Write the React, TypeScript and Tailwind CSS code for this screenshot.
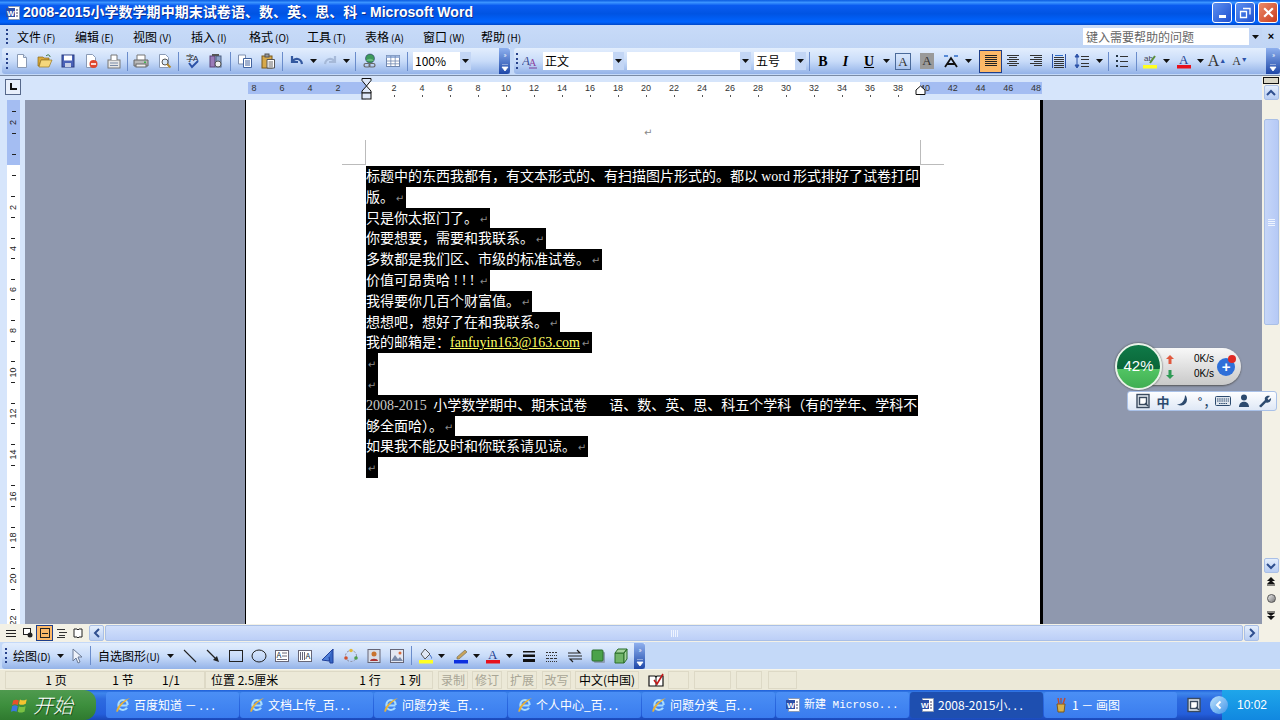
import type { ReactNode } from "react";

const Svg = ({ children, size = 16 }: { children: ReactNode; size?: number }) => (
  <svg viewBox="0 0 16 16" width={size} height={size} className="shrink-0">
    {children}
  </svg>
);

const Page = ({ fold = "#8a9ab5" }: { fold?: string }) => (
  <path d="M3.5 1.5h6l3 3v10h-9z" fill="#fff" stroke={fold} />
);

const icons = {
  newDoc: <Svg><Page /><path d="M9.5 1.5v3h3" fill="#dbe6f6" stroke="#8a9ab5" /></Svg>,
  open: <Svg><path d="M1 4h5l1 1h5v2H4L2 13H1z" fill="#d9a93b" stroke="#8d6a1b" strokeWidth=".7" /><path d="M4 7h11l-3 7H2z" fill="#f5d77c" stroke="#9a7520" strokeWidth=".7" /><path d="M9 3c2-2 4-1 4 1" fill="none" stroke="#2d6a2d" /></Svg>,
  save: <Svg><rect x="2" y="2" width="12" height="12" fill="#4a62b8" stroke="#2b3c80" /><rect x="4" y="2.5" width="8" height="5" fill="#fff" /><rect x="5" y="10" width="6" height="4" fill="#c6cfe6" /></Svg>,
  perm: <Svg><Page /><circle cx="10.5" cy="11" r="4" fill="#e0462e" /><rect x="8" y="10.2" width="5" height="1.6" fill="#fff" /></Svg>,
  mail: <Svg><rect x="2" y="7" width="12" height="8" fill="#e6e6e6" stroke="#777" /><path d="M5 7V2h6v5" fill="#fff" stroke="#777" /><path d="M4 10h8M4 12.5h8" stroke="#7a8ba8" /></Svg>,
  print: <Svg><path d="M4 7V2h8v5" fill="#fff" stroke="#777" /><path d="M1 7h14v6H1z" fill="#b9b9b9" stroke="#666" /><rect x="3" y="11" width="10" height="3" fill="#eee" stroke="#666" /><rect x="11" y="8.5" width="2" height="1.5" fill="#3fb34f" /></Svg>,
  preview: <Svg><Page /><circle cx="9" cy="9" r="3" fill="#d8e8f8" stroke="#555" /><path d="M11 11l3.5 3.5" stroke="#b5882a" strokeWidth="2" /></Svg>,
  spell: <Svg><text x="1" y="8" fontSize="8" fill="#222" fontFamily="Noto Sans CJK SC">字</text><text x="8" y="8" fontSize="8" fill="#223" fontFamily="Liberation Sans">A</text><path d="M4 10l3 4 6-6" fill="none" stroke="#2c52a8" strokeWidth="2" /></Svg>,
  research: <Svg><rect x="2" y="3" width="5" height="11" fill="#9a7bb8" stroke="#5b4478" /><rect x="8" y="3" width="5" height="11" fill="#8ea4c8" stroke="#4b5f80" /><circle cx="10" cy="11" r="3" fill="#f0f0f0" stroke="#555" /><rect x="4" y="1" width="7" height="2" fill="#555" /></Svg>,
  copy: <Svg><path d="M1.5 2h7v9h-7z" fill="#fff" stroke="#7e8fae" /><path d="M6.5 5.5h8v9h-8z" fill="#fff" stroke="#42639e" /><path d="M8 8h5M8 10h5M8 12h5" stroke="#42639e" /></Svg>,
  paste: <Svg><rect x="2" y="3" width="10" height="12" fill="#d7a94a" stroke="#7a5a1d" /><rect x="5" y="1" width="4" height="3" fill="#999" stroke="#555" /><path d="M7 6.5h7.5v8.5H7z" fill="#fff" stroke="#555" /><path d="M8.5 9h4.5M8.5 11h4.5M8.5 13h4.5" stroke="#666" /></Svg>,
  undo: <Svg><path d="M3 3v6h6M3.5 8.5C6 4.5 12 5 13 11" fill="none" stroke="#33589f" strokeWidth="2.2" /></Svg>,
  redo: <Svg><path d="M13 3v6H7M12.5 8.5C10 4.5 4 5 3 11" fill="none" stroke="#a6b9d8" strokeWidth="2.2" /></Svg>,
  link: <Svg><circle cx="8" cy="5.5" r="4.5" fill="#3d9a5b" stroke="#226" strokeWidth=".5" /><path d="M4 8c2-3 6-3 8 0" fill="#6bbd7f" /><rect x="2" y="10.5" width="6" height="3.5" rx="1.7" fill="none" stroke="#666" strokeWidth="1.2" /><rect x="7" y="10.5" width="6" height="3.5" rx="1.7" fill="none" stroke="#666" strokeWidth="1.2" /></Svg>,
  table: <Svg><rect x="1.5" y="2.5" width="13" height="11" fill="#fff" stroke="#7087b0" /><path d="M1.5 2.5h13v2.5h-13z" fill="#9db6de" /><path d="M1.5 8h13M1.5 10.8h13M5.8 3v10M10.2 3v10" stroke="#7087b0" strokeWidth=".8" /></Svg>,
  styles: <Svg><text x="0" y="12" fontSize="13" fontStyle="italic" fontFamily="Liberation Serif" fill="#3e4f92">A</text><text x="7" y="13" fontSize="10" fontFamily="Liberation Serif" fill="#8b3c9c">A</text><path d="M7 15h8" stroke="#7b3f9b" /></Svg>,
  scale: <Svg><path d="M2 14L8 5l6 9M4.5 11h7" fill="none" stroke="#111" strokeWidth="1.8" /><path d="M1 3h4M11 3h4" stroke="#2c6bc9" strokeWidth="1.6" /></Svg>,
  left: <Svg>{[2.5, 4.5, 6.5, 8.5, 10.5, 12.5].map(y => <path key={y} d={`M2 ${y}h12`} stroke="#222" />)}</Svg>,
  center: <Svg>{[2.5, 6.5, 10.5].map(y => <path key={y} d={`M2 ${y}h12`} stroke="#333" />)}{[4.5, 8.5, 12.5].map(y => <path key={y} d={`M4 ${y}h8`} stroke="#333" />)}</Svg>,
  right: <Svg>{[2.5, 6.5, 10.5].map(y => <path key={y} d={`M2 ${y}h12`} stroke="#333" />)}{[4.5, 8.5, 12.5].map(y => <path key={y} d={`M6 ${y}h8`} stroke="#333" />)}</Svg>,
  dist: <Svg><path d="M1.5 1v14M14.5 1v14" stroke="#2c52a8" />{[4.5, 6.5, 8.5, 10.5, 12.5, 14.5].map(y => <path key={y} d={`M3 ${y}h10`} stroke="#333" />)}<path d="M4 2.5h8" stroke="#2c6bc9" /></Svg>,
  spacing: <Svg><path d="M3 1L1 4h4zM3 15l-2-3h4zM3 4v8" fill="#2c52a8" stroke="#2c52a8" /><path d="M7 3.5h8M7 6.5h8M7 10.5h8M7 13.5h8" stroke="#333" /></Svg>,
  bullets: <Svg>{[3.5, 8.5, 13.5].map(y => <g key={y}><rect x="2" y={y - 1.5} width="2" height="2" fill="#234" /><path d={`M6 ${y}h8`} stroke="#333" /></g>)}</Svg>,
  highlight: <Svg><text x="2" y="8" fontSize="8" fontFamily="Liberation Sans" fill="#445">ab</text><path d="M8 10l5-7" stroke="#5b8f3a" strokeWidth="2" /><rect x="1" y="12" width="14" height="3.5" fill="#ffff22" /></Svg>,
  colorA: <Svg><text x="3" y="11" fontSize="13" fontFamily="Liberation Serif" fill="#23408f">A</text><rect x="1" y="12" width="14" height="3.5" fill="#e8101c" /></Svg>,
  pointer: <Svg><path d="M5 1v12l3-3 2 5 2-1-2-5h4z" fill="#eef2fa" stroke="#6a7a96" /></Svg>,
  line: <Svg><path d="M2 2l12 12" stroke="#222" strokeWidth="1.1" /></Svg>,
  arrow: <Svg><path d="M2 2l9 9" stroke="#222" strokeWidth="1.2" /><path d="M14 14l-6-2 4-4z" fill="#222" /></Svg>,
  rect: <Svg><rect x="1.5" y="2.5" width="13" height="11" fill="none" stroke="#222" /></Svg>,
  ellipse: <Svg><ellipse cx="8" cy="8" rx="7" ry="6" fill="none" stroke="#222" /></Svg>,
  textbox: <Svg><rect x="1.5" y="2.5" width="13" height="11" fill="#fff" stroke="#667" /><text x="2.5" y="10" fontSize="8" fill="#234">A</text><path d="M8 5h5M8 8h5M3 11.5h10" stroke="#667" /></Svg>,
  vtext: <Svg><rect x="1.5" y="2.5" width="13" height="11" fill="#fff" stroke="#667" /><path d="M3.5 4v8M5.5 4v8M7.5 4v8" stroke="#667" /><text x="8.5" y="11" fontSize="8" fill="#234">A</text></Svg>,
  wordart: <Svg><path d="M13 1L2 12l7 1z" fill="#4f7fd8" stroke="#1f3f9a" /><path d="M13 1v14h-3L9 9" fill="#3565c4" stroke="#1f3f9a" /></Svg>,
  diagram: <Svg><circle cx="8" cy="8" r="5.5" fill="none" stroke="#889" strokeDasharray="2 1.5" /><circle cx="8" cy="2.5" r="1.8" fill="#e2b93b" /><circle cx="13" cy="10" r="1.8" fill="#4da04d" /><circle cx="3" cy="10" r="1.8" fill="#d0502e" /></Svg>,
  clipart: <Svg><rect x="2" y="1.5" width="12" height="13" fill="#d8dde8" stroke="#667" /><circle cx="8" cy="6" r="2.5" fill="#c9732e" /><path d="M4 13c0-3 8-3 8 0z" fill="#a33" /></Svg>,
  picture: <Svg><rect x="1.5" y="1.5" width="13" height="13" fill="#e4e8f2" stroke="#667" /><path d="M2 13l4-6 3 4 2-2 3 4z" fill="#7a8aa8" /><circle cx="11" cy="5" r="1.5" fill="#d86a3a" /></Svg>,
  fill: <Svg><path d="M7 1l5 5-5 5-4-5z" fill="#dfe7f4" stroke="#555" /><path d="M12 7c1 2 2 2 1.5 3.5" stroke="#3565c4" fill="none" /><rect x="1" y="12" width="14" height="3.5" fill="#ffff22" /></Svg>,
  pen: <Svg><path d="M4 9l8-7 2 2-8 7H4z" fill="#c8a35a" stroke="#665" strokeWidth=".6" /><rect x="1" y="12" width="14" height="3.5" fill="#0c2fe0" /></Svg>,
  lineStyle: <Svg><rect x="2" y="3" width="12" height="1.5" fill="#111" /><rect x="2" y="6.5" width="12" height="2.5" fill="#111" /><rect x="2" y="11" width="12" height="3" fill="#111" /></Svg>,
  dash: <Svg><path d="M2 4.5h12" stroke="#333" strokeDasharray="2 1" /><path d="M2 7.5h12" stroke="#333" strokeDasharray="1 1" /><path d="M2 10.5h12" stroke="#333" strokeDasharray="3 1" /><path d="M2 13.5h12" stroke="#333" strokeDasharray="1 1" /></Svg>,
  arrows: <Svg><path d="M1 5h12l-3-3M15 11H3l3 3" fill="none" stroke="#222" strokeWidth="1.2" /><path d="M1 8h14" stroke="#222" /></Svg>,
  shadow: <Svg><rect x="4" y="4" width="11" height="11" rx="1" fill="#8c9cb4" /><rect x="2" y="2" width="11" height="11" rx="1" fill="#4aa24a" stroke="#2b6e2b" /></Svg>,
  cube: <Svg><path d="M2 5h9v10H2z" fill="#70b468" stroke="#2b6e2b" /><path d="M2 5l3-4h9l-3 4zM11 5l3-4v10l-3 4z" fill="#a4d29c" stroke="#2b6e2b" /></Svg>,
  spellBook: <Svg><path d="M1 4h6l1 1 1-1h6v10H1z" fill="#fff" stroke="#111" strokeWidth="1.2" /><path d="M8 5v9" stroke="#111" /><path d="M6 8l3 4 6-10" fill="none" stroke="#c01818" strokeWidth="1.6" /></Svg>,
  ie: <Svg><path d="M3.5 8.5h9M12.6 8c0-3-2-5-4.6-5S3.4 5.2 3.4 8s2 5 4.6 5c1.8 0 3.2-.8 4-2.2" fill="none" stroke="#a8dcff" strokeWidth="2.2" /><path d="M1.5 15C.5 11 7 3 15 1c-3.5 2.500-10 7-12 13.5z" fill="#e6b23a" /></Svg>,
  word: <Svg><path d="M3.5 1.5h11v13h-11z" fill="#fff" stroke="#8a9ab5" /><rect x="1" y="3" width="9" height="9" fill="#2b4fa8" /><text x="2" y="10.5" fontSize="8" fontWeight="700" fill="#fff" fontFamily="Liberation Sans">W</text><path d="M11 5h2M11 8h2M11 11h2" stroke="#446" /></Svg>,
  paint: <Svg><path d="M4 7h8l-1 8H5z" fill="#d8b04a" stroke="#7a5a1d" /><path d="M6 7L5 1M8 7V1M10 7l2-6" stroke="#c04a2e" strokeWidth="1.4" /><path d="M8 7V3" stroke="#3a78c8" strokeWidth="1.4" /></Svg>,
  tray: <Svg><rect x="2" y="1.5" width="12" height="13" fill="#dfe6ee" stroke="#3a4a5e" strokeWidth="1.4" /><rect x="4.5" y="4.5" width="7" height="7" fill="#fff" stroke="#3a4a5e" strokeWidth="1.4" /><path d="M10 10l3 3" stroke="#3a4a5e" strokeWidth="1.4" /></Svg>,
  xp: <Svg size={18}><path d="M2 4c2-1 3-1 5 0l-1 4c-2-1-3-1-5 0z" fill="#e8502a" /><path d="M8 3c2 1 3 1 6 0l-1 4c-3 1-4 1-6 0z" fill="#f4c430" /><path d="M1 9c2-1 3-1 5 0l-1 5c-2-1-3-1-5 0z" fill="#3a78e0" /><path d="M7 9c2 1 3 1 6 0l-1 5c-3 1-4 1-6 0z" fill="#7ac143" /></Svg>,
};

const Drop = () => (
  <svg viewBox="0 0 7 4" width="7" height="4" className="shrink-0">
    <path d="M0 0h7L3.5 4z" fill="#111" />
  </svg>
);

const Btn = ({ w = "w-[23px]", active, children }: { w?: string; active?: boolean; children: ReactNode }) => (
  <div className={`flex h-[23px] shrink-0 items-center justify-center ${w} ${active ? "border border-[#1f3f8a] bg-[#fdb968]" : ""}`}>
    {children}
  </div>
);

const Sep = ({ w = "w-[6px]" }: { w?: string }) => (
  <div className={`flex shrink-0 justify-center ${w}`}>
    <div className="h-[19px] w-px bg-[#6a8ccb]" />
  </div>
);

const Grip = () => (
  <div className="flex h-[18px] w-[3px] shrink-0 flex-col justify-between py-[1px]">
    {[0, 1, 2, 3].map(i => <div key={i} className="h-[2px] w-[2px] bg-[#27418a]" />)}
  </div>
);

const Chevron = ({ w = "w-[11px]" }: { w?: string }) => (
  <div className={`flex h-[26px] shrink-0 flex-col items-center justify-between rounded-r-[3px] bg-gradient-to-b from-[#8fb0ee] to-[#1f47a8] py-[3px] ${w}`}>
    <span className="text-[7px] leading-[7px] tracking-[-1px] text-white">››</span>
    <svg viewBox="0 0 8 7" width="8" height="7"><path d="M1 0h6M1 3h6L4 7z" fill="#fff" stroke="#fff" strokeWidth=".8" /></svg>
  </div>
);

const Combo = ({ w, text }: { w: string; text?: string }) => (
  <div className={`flex h-[18px] shrink-0 items-center justify-between bg-white text-[12px] leading-none ${w}`}>
    <span className="pl-[2px]">{text}</span>
    <div className="flex h-full w-[11px] items-center justify-center bg-[#c3d6f5]"><Drop /></div>
  </div>
);

const barBg = "bg-gradient-to-b from-[#e3eefd] via-[#c9dcf9] to-[#94b3e8]";

const menus: [string, string][] = [["文件", "(F)"], ["编辑", "(E)"], ["视图", "(V)"], ["插入", "(I)"], ["格式", "(O)"], ["工具", "(T)"], ["表格", "(A)"], ["窗口", "(W)"], ["帮助", "(H)"]];

const Mark = () => (
  <span className="inline-block w-[12px] text-center align-baseline font-['DejaVu_Sans'] text-[10px] text-[#8c8c8c]">↵</span>
);

const Line = ({ children }: { children?: ReactNode }) => (
  <div className="h-[20.8px] w-fit whitespace-pre bg-black leading-[19px] text-white"><span>{children}</span><Mark /></div>
);

const HRuler = () => (
  <div className="relative flex h-[24px] w-[794px] shrink-0 overflow-hidden pt-[6px] font-['Liberation_Sans'] text-[9px] leading-[12px] text-[#333]">
    <div className="flex h-[12px] w-[118px] shrink-0 bg-[#a4bdf2]">
      <span className="mr-[8px] w-[12px] text-center">8</span>
      {[6, 4, 2].map(n => <span key={n} className="w-[28px] text-center">{n}</span>)}
    </div>
    <div className="h-[18px] w-[554px] shrink-0 bg-white pl-[14px]">
      <div className="flex">
        {Array.from({ length: 19 }, (_, i) => (i + 1) * 2).map(n => (
          <div key={n} className="flex w-[28px] shrink-0 flex-col items-center">
            <span>{n}</span>
            <span className="mt-[1px] h-[2px] w-px bg-[#555]" />
          </div>
        ))}
      </div>
    </div>
    <div className="h-[12px] w-[122px] shrink-0 bg-[#a4bdf2]">
      <div className="-ml-[9px] flex">
        {[40, 42, 44, 46, 48].map(n => <span key={n} className="w-[27.8px] shrink-0 text-center">{n}</span>)}
      </div>
    </div>
    <svg viewBox="0 0 11 22" width="11" height="22" className="absolute left-[113px] top-[2px]">
      <path d="M1 .5h9v2L5.5 8 1 2.5zM5.5 8L10 13v2H1v-2z" fill="#dfe8f8" stroke="#111" />
      <rect x="1" y="15" width="9" height="6" fill="#dfe8f8" stroke="#111" />
    </svg>
    <svg viewBox="0 0 11 10" width="11" height="10" className="absolute left-[667px] top-[9px]">
      <path d="M1 9.5V5l4.5-4L10 5v4.5z" fill="#fff" stroke="#111" />
    </svg>
  </div>
);

const VRuler = () => (
  <div className="flex w-[25px] shrink-0 flex-col overflow-hidden bg-[#d6e5fb] pl-[7px] font-['Liberation_Sans'] text-[9px] leading-[9px] text-[#222]">
    <div className="flex h-[65px] w-[13px] shrink-0 flex-col items-center gap-[6px] bg-[#a4bdf2] pt-[11px]">
      <span className="h-px w-[4px] bg-[#222]" />
      <span className="h-[9px] -rotate-90">2</span>
      <span className="h-px w-[4px] bg-[#222]" />
      <span className="mt-[14px] h-px w-[4px] bg-[#222]" />
    </div>
    <div className="flex w-[13px] flex-col items-center bg-white">
      <div className="flex h-[21.4px] items-center"><span className="h-px w-[4px] bg-[#222]" /></div>
      {[2, 4, 6, 8, 10, 12, 14, 16, 18, 20, 22].map(n => (
        <div key={n} className="flex h-[41.3px] shrink-0 flex-col items-center justify-center gap-[5.3px]">
          <span className="h-px w-[4px] bg-[#222]" />
          <span className="h-[9px] -rotate-90 whitespace-nowrap">{n}</span>
          <span className="h-px w-[4px] bg-[#222]" />
        </div>
      ))}
    </div>
  </div>
);

const ScrollBtn = ({ d, className = "" }: { d: string; className?: string }) => (
  <div className={`flex h-[15px] w-[15px] shrink-0 items-center justify-center rounded-[2px] border border-[#a9bfe6] bg-gradient-to-b from-[#e4eefc] to-[#b8cdf3] ${className}`}>
    <svg viewBox="0 0 10 10" width="10" height="10"><path d={d} fill="none" stroke="#2f4f8f" strokeWidth="2" /></svg>
  </div>
);

const VScroll = () => (
  <div className="flex w-[18px] shrink-0 flex-col items-center bg-[#f3f1e6] pt-[1px]">
    <div className="h-[7px] w-[16px] border border-[#111] bg-[#d9d6c6]" />
    <ScrollBtn d="M1 7l4-4 4 4" className="mt-[1px]" />
    <div className="mt-[19px] flex h-[206px] w-[15px] shrink-0 items-center justify-center rounded-[2px] border border-[#a9bfe6] bg-gradient-to-r from-[#c6d6f8] to-[#b5c9f6]">
      <div className="flex flex-col gap-[1px]">
        {[0, 1, 2, 3].map(i => <span key={i} className="block h-px w-[7px] bg-[#eef4ff]" />)}
      </div>
    </div>
    <ScrollBtn d="M1 3l4 4 4-4" className="mt-[233px]" />
    <div className="mt-[4px] flex flex-col items-center gap-[8px]">
      <svg viewBox="0 0 10 9" width="10" height="9"><path d="M5 0l4 4H1zM5 3l4 4H1z" fill="#111" /><path d="M1 8h8" stroke="#111" /></svg>
      <span className="h-[9px] w-[9px] rounded-full border border-[#555] bg-gradient-to-br from-[#eee] to-[#777]" />
      <svg viewBox="0 0 10 9" width="10" height="9"><path d="M1 1h8" stroke="#111" /><path d="M5 5L1 2h8zM5 9L1 5h8z" fill="#111" /></svg>
    </div>
  </div>
);

const tasks: { icon: ReactNode; text: string; on?: boolean; mono?: boolean }[] = [
  { icon: icons.ie, text: "百度知道 － . . ." },
  { icon: icons.ie, text: "文档上传_百. . ." },
  { icon: icons.ie, text: "问题分类_百. . ." },
  { icon: icons.ie, text: "个人中心_百. . ." },
  { icon: icons.ie, text: "问题分类_百. . ." },
  { icon: icons.word, text: "新建 Microso...", mono: true },
  { icon: icons.word, text: "2008-2015小. . .", on: true },
  { icon: icons.paint, text: "1 － 画图" },
];

export default function App() {
  return (
    <div className="relative flex h-[720px] w-[1280px] flex-col overflow-hidden bg-[#c4d9f8] font-['Noto_Sans_CJK_SC','Liberation_Sans',sans-serif] text-black">
      {/* title bar */}
      <div className="flex h-[25px] shrink-0 items-center bg-[linear-gradient(180deg,#0a5be0_0%,#3a93ff_10%,#0a5cf0_22%,#0054e3_55%,#0064ff_88%,#0048c8_100%)] pl-[5px] pr-[2px]">
        {icons.word}
        <span className="ml-[2px] font-['Liberation_Sans','Noto_Sans_CJK_SC',sans-serif] text-[14px] font-bold tracking-[0.05px] text-white [text-shadow:1px_1px_#0f2f8f]">2008-2015小学数学期中期末试卷语、数、英、思、科 - Microsoft Word</span>
        <div className="ml-auto flex gap-[3px]">
          <div className="flex h-[21px] w-[20px] items-end justify-center rounded-[3px] border border-white bg-gradient-to-br from-[#5d8ff0] to-[#1f4fd0] pb-[4px]"><span className="h-[3px] w-[7px] bg-white" /></div>
          <div className="flex h-[21px] w-[20px] items-center justify-center rounded-[3px] border border-white bg-gradient-to-br from-[#5d8ff0] to-[#1f4fd0]">
            <svg viewBox="0 0 12 12" width="12" height="12"><path d="M4 1.5h7v6M1.5 4.5h6v6h-6z" fill="none" stroke="#fff" strokeWidth="1.3" /></svg>
          </div>
          <div className="flex h-[21px] w-[20px] items-center justify-center rounded-[3px] border border-white bg-gradient-to-br from-[#ec8a68] to-[#c8391a]">
            <svg viewBox="0 0 12 12" width="13" height="13"><path d="M2 2l8 8M10 2l-8 8" stroke="#fff" strokeWidth="2" /></svg>
          </div>
        </div>
      </div>

      {/* menu bar */}
      <div className="flex h-[23px] shrink-0 items-center bg-gradient-to-b from-[#c8dbf8] to-[#c0d5f5] pl-[6px] text-[12px]">
        <Grip />
        <div className="ml-[8px] flex">
          {menus.map(([name, key]) => (
            <div key={name} className="w-[58px] shrink-0 whitespace-nowrap">{name}<span className="ml-[2px] text-[10px]">{key}</span></div>
          ))}
        </div>
        <div className="ml-auto flex items-center">
          <div className="flex h-[17px] w-[179px] items-center justify-between bg-white pl-[3px] text-[#666]">
            <span>键入需要帮助的问题</span>
            <div className="flex h-full w-[13px] items-center justify-center bg-[#c3d6f5]"><Drop /></div>
          </div>
          <span className="w-[18px] text-center font-['Liberation_Sans'] text-[11px] font-bold">×</span>
        </div>
      </div>

      {/* standard + formatting toolbars */}
      <div className="flex h-[28px] shrink-0 gap-[4px] border-b border-[#7a8ba5] pl-[2px]">
        <div className={`flex h-[26px] w-[508px] shrink-0 items-center rounded-l-[3px] pl-[4px] ${barBg}`}>
          <Grip />
          <div className="w-[1px]" />
          <Btn>{icons.newDoc}</Btn><Btn>{icons.open}</Btn><Btn>{icons.save}</Btn><Btn>{icons.perm}</Btn><Btn>{icons.mail}</Btn>
          <Sep w="w-[4px]" />
          <Btn>{icons.print}</Btn><Btn>{icons.preview}</Btn>
          <Sep />
          <Btn>{icons.spell}</Btn><Btn>{icons.research}</Btn>
          <Sep />
          <Btn>{icons.copy}</Btn><Btn>{icons.paste}</Btn>
          <Sep w="w-[7px]" />
          <Btn w="w-[21px]">{icons.undo}</Btn><Btn w="w-[12px]"><Drop /></Btn>
          <Btn w="w-[21px]">{icons.redo}</Btn><Btn w="w-[12px]"><Drop /></Btn>
          <Sep />
          <Btn>{icons.link}</Btn><Btn>{icons.table}</Btn>
          <Sep />
          <Combo w="w-[58px] ml-[3px]" text="100%" />
          <div className="flex-1" />
          <Chevron />
        </div>
        <div className={`flex h-[26px] flex-1 items-center rounded-l-[3px] pl-[2px] ${barBg}`}>
          <Grip />
          <Btn w="w-[21px]">{icons.styles}</Btn>
          <Combo w="w-[81px] ml-[3px]" text="正文" />
          <Combo w="w-[124px] ml-[3px]" />
          <Combo w="w-[52px] ml-[3px]" text="五号" />
          <Sep />
          <Btn w="w-[22px]"><span className="font-['Liberation_Serif'] text-[14px] font-bold">B</span></Btn>
          <Btn><span className="font-['Liberation_Serif'] text-[14px] font-bold italic">I</span></Btn>
          <Btn w="w-[24px]"><span className="font-['Liberation_Serif'] text-[14px] font-bold underline">U</span></Btn>
          <Btn w="w-[10px]"><Drop /></Btn>
          <Btn w="w-[24px]"><span className="border border-[#4a6a9a] px-[2px] font-['Liberation_Serif'] text-[13px] leading-[15px] text-[#333]">A</span></Btn>
          <Btn w="w-[24px]"><span className="bg-[#9a9a9a] px-[2px] font-['Liberation_Serif'] text-[13px] leading-[16px] text-[#333]">A</span></Btn>
          <Btn w="w-[24px]">{icons.scale}</Btn>
          <Btn w="w-[10px]"><Drop /></Btn>
          <div className="w-[6px]" />
          <Btn active>{icons.left}</Btn>
          <Btn w="w-[22px]">{icons.center}</Btn><Btn>{icons.right}</Btn><Btn>{icons.dist}</Btn>
          <Btn w="w-[23px]">{icons.spacing}</Btn><Btn w="w-[12px]"><Drop /></Btn>
          <Sep />
          <Btn w="w-[22px]">{icons.bullets}</Btn>
          <Sep />
          <Btn w="w-[22px]">{icons.highlight}</Btn><Btn w="w-[10px]"><Drop /></Btn>
          <div className="w-[2px]" />
          <Btn w="w-[22px]">{icons.colorA}</Btn><Btn w="w-[11px]"><Drop /></Btn>
          <Btn w="w-[22px]"><span className="font-['Liberation_Serif'] text-[16px] text-[#333]">A<sup className="text-[7px] text-[#2c52a8]">▲</sup></span></Btn>
          <Btn w="w-[24px]"><span className="font-['Liberation_Serif'] text-[12px] text-[#333]">A<sup className="text-[7px] text-[#2c52a8]">▼</sup></span></Btn>
          <div className="flex-1" />
          <Chevron w="w-[14px]" />
        </div>
      </div>

      {/* document + vertical scrollbar */}
      <div className="flex h-[524px] min-h-0 flex-1">
        <div className="flex min-w-0 flex-1 flex-col">
          <div className="flex h-[24px] shrink-0 bg-[#d6e5fb]">
            <div className="ml-[5px] mt-[3px] flex h-[16px] w-[16px] items-center justify-center border border-[#56688a] bg-[#e8effb]">
              <svg viewBox="0 0 8 8" width="8" height="8"><path d="M1 0h2v5h5v2H1z" fill="#111" /></svg>
            </div>
            <div className="w-[227px] shrink-0" />
            <HRuler />
          </div>
          <div className="flex min-h-0 flex-1 overflow-hidden">
            <VRuler />
            <div className="flex min-w-0 flex-1 bg-[#8f98ae] pl-[220px]">
              <div className="relative h-full w-[798px] shrink-0 border-l border-l-black border-r-[3px] border-r-black bg-white pl-[120px] pt-[66px] text-[14px]">
                <span className="absolute left-[398px] top-[28px] font-['DejaVu_Sans'] text-[10px] leading-none text-[#888]">↵</span>
                <span className="absolute left-[119px] top-[40px] h-[24px] w-px bg-[#bbb]" />
                <span className="absolute left-[96px] top-[64px] h-px w-[24px] bg-[#bbb]" />
                <span className="absolute left-[674px] top-[40px] h-[24px] w-px bg-[#bbb]" />
                <span className="absolute left-[674px] top-[64px] h-px w-[24px] bg-[#bbb]" />
                <div className="h-[20.8px] w-[554px] whitespace-pre bg-black leading-[19px] text-white">标题中的东西我都有，有文本形式的、有扫描图片形式的。都以 <span className="font-['Liberation_Serif']">word</span> 形式排好了试卷打印</div>
                <Line>版。</Line>
                <Line>只是你太抠门了。</Line>
                <Line>你要想要，需要和我联系。</Line>
                <Line>多数都是我们区、市级的标准试卷。</Line>
                <Line>价值可昂贵哈<span className="font-['Liberation_Serif']"> ! ! ! </span></Line>
                <Line>我得要你几百个财富值。</Line>
                <Line>想想吧，想好了在和我联系。</Line>
                <Line>我的邮箱是：<span className="font-['Liberation_Serif'] text-[#ffff66] underline">fanfuyin163@163.com</span></Line>
                <Line />
                <Line />
                <div className="h-[20.8px] w-[552px] whitespace-pre bg-black leading-[19px] text-white"><span className="font-['Liberation_Serif'] text-[#c8c8c8]">2008-2015 </span> 小学数学期中、期末试卷<span className="ml-[22px]">语、数、英、思、科五个学科（有的学年、学科不</span></div>
                <Line>够全面哈）。</Line>
                <Line>如果我不能及时和你联系请见谅。</Line>
                <Line />
              </div>
              <div className="flex-1" />
            </div>
          </div>
        </div>
        <VScroll />
      </div>

      {/* view buttons + horizontal scrollbar */}
      <div className="flex h-[18px] shrink-0 items-center bg-[#f3f1e6] pl-[3px] pr-[21px]">
        <Btn w="w-[16px]"><svg viewBox="0 0 10 10" width="10" height="10"><path d="M0 2.5h10M0 5.5h10M0 8.5h10" stroke="#222" /></svg></Btn>
        <Btn w="w-[17px]"><svg viewBox="0 0 10 10" width="10" height="10"><rect x=".5" y=".5" width="7" height="6" fill="#fff" stroke="#222" /><circle cx="7" cy="7" r="2.5" fill="#222" /></svg></Btn>
        <div className="flex h-[16px] w-[17px] shrink-0 items-center justify-center border border-[#1f3f8a] bg-[#fdb968]"><svg viewBox="0 0 10 10" width="10" height="10"><rect x=".5" y=".5" width="9" height="9" fill="none" stroke="#222" /><path d="M2 5.5h6" stroke="#222" /></svg></div>
        <Btn w="w-[17px]"><svg viewBox="0 0 10 10" width="10" height="10"><path d="M0 1.5h8M2 4.5h8M2 7.5h6M0 9.5h8" stroke="#333" /></svg></Btn>
        <Btn w="w-[16px]"><svg viewBox="0 0 10 10" width="10" height="10"><path d="M1 1h3l1 1 1-1h3v8H6L5 10 4 9H1z" fill="#fff" stroke="#222" /></svg></Btn>
        <ScrollBtn d="M7 1L3 5l4 4" className="ml-[3px] h-[16px]" />
        <div className="ml-[1px] flex h-[16px] flex-1 items-center justify-center rounded-[2px] border border-[#a9bfe6] bg-gradient-to-b from-[#d2e0fb] to-[#bccff7]">
          <div className="flex gap-[1px]">
            {[0, 1, 2, 3].map(i => <span key={i} className="h-[7px] w-px bg-[#eef4ff]" />)}
          </div>
        </div>
        <ScrollBtn d="M3 1l4 4-4 4" className="ml-[1px] h-[16px]" />
      </div>

      {/* drawing toolbar */}
      <div className="flex h-[27px] shrink-0 items-center bg-[#c4d9f8] pl-[2px]">
        <div className={`flex h-[26px] w-[643px] shrink-0 items-center rounded-l-[3px] pl-[3px] text-[12px] ${barBg}`}>
          <Grip />
          <span className="ml-[5px] w-[42px] whitespace-nowrap">绘图<span className="text-[10px]">(D)</span></span>
          <Btn w="w-[10px]"><Drop /></Btn>
          <Btn w="w-[21px]">{icons.pointer}</Btn>
          <Sep w="w-[9px]" />
          <span className="ml-[3px] w-[65px] whitespace-nowrap">自选图形<span className="text-[10px]">(U)</span></span>
          <Btn w="w-[15px]"><Drop /></Btn>
          <Btn>{icons.line}</Btn><Btn>{icons.arrow}</Btn><Btn>{icons.rect}</Btn><Btn>{icons.ellipse}</Btn>
          <Btn>{icons.textbox}</Btn><Btn>{icons.vtext}</Btn><Btn>{icons.wordart}</Btn><Btn>{icons.diagram}</Btn>
          <Btn>{icons.clipart}</Btn><Btn>{icons.picture}</Btn>
          <Sep />
          <div className="w-[2px]" />
          <Btn w="w-[20px]">{icons.fill}</Btn><Btn w="w-[10px]"><Drop /></Btn>
          <div className="w-[5px]" />
          <Btn w="w-[20px]">{icons.pen}</Btn><Btn w="w-[10px]"><Drop /></Btn>
          <div className="w-[1px]" />
          <Btn w="w-[22px]">{icons.colorA}</Btn><Btn w="w-[10px]"><Drop /></Btn>
          <div className="w-[3px]" />
          <Btn>{icons.lineStyle}</Btn><Btn>{icons.dash}</Btn><Btn>{icons.arrows}</Btn><Btn>{icons.shadow}</Btn><Btn>{icons.cube}</Btn>
          <div className="flex-1" />
          <Chevron />
        </div>
      </div>

      {/* status bar */}
      <div className="flex h-[21px] shrink-0 items-center border-t border-[#f8f6ec] bg-[#ece9d8] pl-[5px] text-[12px] leading-none">
        <div className="flex h-[18px] w-[200px] items-center border border-[#ddd9c6]">
          <span className="w-[100px] text-center">1 页</span>
          <span className="w-[34px] text-center">1 节</span>
          <span className="w-[62px] text-center">1/1</span>
        </div>
        <div className="flex h-[18px] w-[228px] items-center border border-[#ddd9c6] pl-[5px]">
          <span className="w-[136px]">位置 2.5厘米</span>
          <span className="w-[46px] text-center">1 行</span>
          <span className="w-[34px] text-center">1 列</span>
        </div>
        <div className="ml-[5px] flex h-[18px] w-[30px] items-center justify-center border border-[#ddd9c6] text-[#a8a595]">录制</div>
        <div className="ml-[4px] flex h-[18px] w-[30px] items-center justify-center border border-[#ddd9c6] text-[#a8a595]">修订</div>
        <div className="ml-[5px] flex h-[18px] w-[30px] items-center justify-center border border-[#ddd9c6] text-[#a8a595]">扩展</div>
        <div className="ml-[5px] flex h-[18px] w-[29px] items-center justify-center border border-[#ddd9c6] text-[#a8a595]">改写</div>
        <div className="ml-[4px] flex h-[18px] w-[64px] items-center justify-center border border-[#ddd9c6]">中文(中国)</div>
        <div className="ml-[5px] flex h-[18px] w-[24px] items-center justify-center">{icons.spellBook}</div>
        <div className="h-[18px] w-[21px] border border-[#ddd9c6]" />
        <div className="ml-[5px] h-[18px] w-[37px] border border-[#ddd9c6]" />
        <div className="ml-[5px] h-[18px] w-[26px] border border-[#ddd9c6]" />
        <div className="ml-[6px] h-[18px] w-[29px] border border-[#ddd9c6]" />
      </div>

      {/* taskbar */}
      <div className="flex h-[30px] shrink-0 items-center bg-[linear-gradient(180deg,#1f5fd8_0%,#3f87ec_10%,#2d6be0_30%,#245edb_80%,#1a48b8_100%)] text-[12px] text-white">
        <div className="flex h-[30px] w-[96px] shrink-0 items-center gap-[4px] rounded-r-[12px] bg-gradient-to-b from-[#4f9a4f] via-[#3d8f3d] to-[#2f7a2f] pl-[11px]">
          {icons.xp}
          <span className="text-[20px] font-light italic leading-none [text-shadow:1px_1px_#1c4f1c]">开始</span>
        </div>
        <div className="ml-[10px] flex gap-px">
          {tasks.map((t, i) => (
            <div key={i} className={`flex h-[26px] w-[133px] shrink-0 items-center gap-[3px] rounded-[3px] pl-[9px] ${t.on ? "bg-[#1e4fb0]" : "bg-gradient-to-b from-[#4b8ff5] to-[#3a7cee]"}`}>
              {t.icon}
              <span className={`whitespace-nowrap ${t.mono ? "font-['Liberation_Mono','Noto_Sans_CJK_SC',monospace] text-[11px]" : ""}`}>{t.text}</span>
            </div>
          ))}
        </div>
        <div className="ml-auto flex h-[30px] items-center">
          {icons.tray}
          <div className="z-10 -mr-[6px] ml-[8px] flex h-[18px] w-[18px] items-center justify-center rounded-full bg-gradient-to-br from-[#bfe3fb] to-[#3c94e8]">
            <svg viewBox="0 0 10 10" width="10" height="10"><path d="M6.5 1.5L3 5l3.5 3.5" fill="none" stroke="#fff" strokeWidth="2" /></svg>
          </div>
          <div className="flex h-[30px] w-[58px] items-center justify-end bg-gradient-to-b from-[#1fa6ea] to-[#1188e0] pr-[13px] font-['Liberation_Sans'] text-[12px]">10:02</div>
        </div>
      </div>

      {/* floating net-speed widget */}
      <div className="absolute left-[1115px] top-[343px] h-[47px] w-[126px]">
        <div className="absolute left-[20px] top-[5px] flex h-[37px] w-[106px] items-center rounded-full bg-gradient-to-b from-[#f8f8f8] to-[#c9c9c9] font-['Liberation_Sans'] text-[10px] text-black shadow-[0_1px_2px_#555]">
          <div className="ml-[31px] flex flex-col gap-[6px]">
            <svg viewBox="0 0 8 9" width="8" height="9"><path d="M4 0l4 4H5.5v5h-3V4H0z" fill="#e0583e" /></svg>
            <svg viewBox="0 0 8 9" width="8" height="9"><path d="M4 9L0 5h2.5V0h3v5H8z" fill="#2f9a55" /></svg>
          </div>
          <div className="ml-[20px] flex flex-col gap-[5px] leading-[10px]">
            <span>0K/s</span>
            <span>0K/s</span>
          </div>
          <div className="relative ml-[3px] flex h-[18px] w-[18px] items-center justify-center rounded-full bg-[#2f6fd8] text-[15px] font-bold leading-none text-white">
            +
            <span className="absolute -right-[1px] -top-[3px] h-[8px] w-[8px] rounded-full bg-[#e02a24]" />
          </div>
        </div>
        <div className="absolute left-0 top-0 flex h-[47px] w-[47px] items-center justify-center rounded-full border-2 border-[#e8f2e8] bg-[linear-gradient(180deg,#0f7a48_0%,#0a6638_55%,#52c463_56%,#3fae52_100%)] font-['Liberation_Sans'] text-[15px] text-white shadow-[0_0_2px_#333]">42%</div>
      </div>

      {/* language bar */}
      <div className="absolute left-[1127px] top-[391px] flex h-[20px] w-[150px] items-center rounded-[3px] border border-[#a9c1e8] bg-gradient-to-b from-[#fdfeff] to-[#dfe8f6] pl-[7px] text-[#2c4a6e]">
        {icons.tray}
        <span className="ml-[2px] w-[20px] text-center text-[13px] font-bold leading-none">中</span>
        <div className="flex w-[20px] justify-center"><svg viewBox="0 0 14 14" width="14" height="14"><path d="M9 1a6 6 0 1 1-8 9c4 1 8-3 8-9z" fill="#2c4a6e" /></svg></div>
        <span className="w-[20px] text-center text-[11px] font-bold leading-none">° ,</span>
        <div className="flex w-[20px] justify-center"><svg viewBox="0 0 16 12" width="16" height="12"><rect x=".5" y="1.5" width="15" height="9" rx="1" fill="#dfe6ee" stroke="#2c4a6e" /><path d="M2 4h12M2 6h12M4 8.5h8" stroke="#2c4a6e" strokeDasharray="1.5 .7" /></svg></div>
        <div className="flex w-[22px] justify-center"><svg viewBox="0 0 12 14" width="12" height="14"><circle cx="6" cy="3.5" r="3" fill="#2c4a6e" /><path d="M1 13c0-7 10-7 10 0z" fill="#2c4a6e" /></svg></div>
        <div className="flex w-[20px] justify-center"><svg viewBox="0 0 14 14" width="14" height="14"><path d="M1 12l6-6c-1-3 2-5 5-4L9.5 4.5l1 1.5L13 4c.5 3-2 5.5-5 4.5l-5 5z" fill="#2c4a6e" /></svg></div>
      </div>
    </div>
  );
}
